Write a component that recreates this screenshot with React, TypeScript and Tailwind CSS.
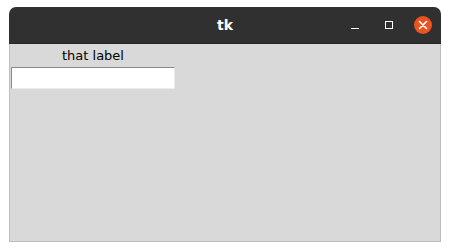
import React from "react";

const App: React.FC = () => {
  return (
    <div className="w-[450px] h-[251px] bg-white pt-[7px] pl-[9px] font-['DejaVu_Sans',sans-serif]">
      <div className="w-[432px] flex flex-col">
        {/* title bar */}
        <div className="h-[37px] rounded-t-[7px] bg-[#303030] border-b border-[#262626] grid grid-cols-[1fr_auto_1fr] items-center">
          <div />
          <span className="text-white font-bold text-[14px] leading-none">tk</span>
          <div className="flex justify-end pr-[1px]">
            <div className="w-[34px] h-[20px] flex items-end justify-center pb-[6px]">
              <div className="w-[8px] h-[1px] bg-white" />
            </div>
            <div className="w-[34px] h-[20px] flex items-center justify-center">
              <div className="w-[8px] h-[8px] border border-white" />
            </div>
            <div className="w-[34px] h-[20px] flex items-center justify-center">
              <div className="w-[18px] h-[18px] rounded-full bg-[#e95420] flex items-center justify-center">
                <svg width="10" height="10" viewBox="0 0 10 10">
                  <path d="M1.5 1.5l7 7M8.5 1.5l-7 7" stroke="white" strokeWidth="1.6" strokeLinecap="round" />
                </svg>
              </div>
            </div>
          </div>
        </div>
        {/* content */}
        <div className="h-[198px] bg-[#d9d9d9] border-x border-b border-[#bdbdbd]">
          <div className="w-[166px] flex flex-col">
            <div className="h-[22px] pt-[2px] flex items-center justify-center text-[13px] text-black">
              that label
            </div>
            <div className="p-[1px]">
              <div className="h-[22px] bg-white border border-t-[#8a8a8a] border-l-[#8a8a8a] border-r-[#ececec] border-b-[#ececec]" />
            </div>
          </div>
        </div>
      </div>
    </div>
  );
};

export default App;
